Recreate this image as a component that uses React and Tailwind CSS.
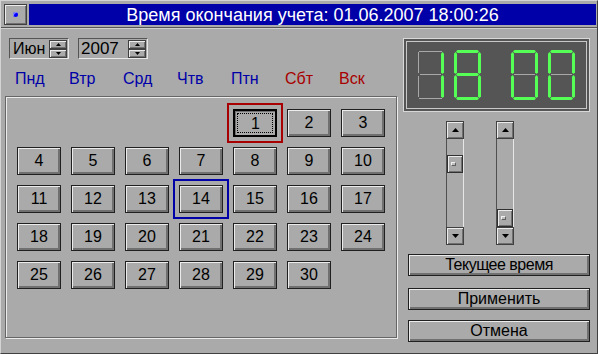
import React from "react";

const days = [
  { t: "Пнд", red: false },
  { t: "Втр", red: false },
  { t: "Срд", red: false },
  { t: "Чтв", red: false },
  { t: "Птн", red: false },
  { t: "Сбт", red: true },
  { t: "Вск", red: true },
];

// June 2007 starts on Friday (col 4)
const cells = [null, null, null, null, ...Array.from({ length: 30 }, (_, i) => i + 1)];

const bevel = "border border-[#202020] bg-[#aaaaaa] shadow-[inset_1px_1px_0_#ececec,inset_-2px_-2px_0_#707070]";

function Arrow({ up, w = 7, h = 4 }) {
  return (
    <svg width={w} height={h} viewBox={`0 0 ${w} ${h}`}>
      <polygon points={up ? `0,${h} ${w / 2},0 ${w},${h}` : `0,0 ${w / 2},${h} ${w},0`} fill="#000" />
    </svg>
  );
}

function Spin() {
  return (
    <div className="flex w-[18px] flex-col">
      <div className="flex h-[9px] items-center justify-center border border-[#404040] bg-[#aaaaaa] shadow-[inset_1px_1px_0_#ececec,inset_-1px_-1px_0_#707070]">
        <Arrow up w={5} h={3} />
      </div>
      <div className="flex h-[9px] items-center justify-center border border-[#404040] bg-[#aaaaaa] shadow-[inset_1px_1px_0_#ececec,inset_-1px_-1px_0_#707070]">
        <Arrow w={5} h={3} />
      </div>
    </div>
  );
}

function DayButton({ n }) {
  if (n === 1) {
    return (
      <div className="flex h-[28px] w-[44px] items-center justify-center border-2 border-black bg-[#aaaaaa] shadow-[inset_1px_1px_0_#707070] outline-2 outline-offset-4 outline-[#a80000]">
        <span className="flex h-[20px] w-[36px] items-center justify-center border border-dotted border-black pl-px pt-px">1</span>
      </div>
    );
  }
  const extra = n === 14 ? " outline-2 outline-offset-4 outline-[#0000a8]" : "";
  return <div className={"flex h-[28px] w-[44px] items-center justify-center " + bevel + extra}>{n}</div>;
}

// seven-segment drawing
const H = (L, y) => `${L + 2},${y + 1.5} ${L + 3.5},${y} ${L + 23.5},${y} ${L + 25},${y + 1.5} ${L + 23.5},${y + 3} ${L + 3.5},${y + 3}`;
const V = (x, y1, y2) => `${x + 1.5},${y1} ${x + 3},${y1 + 1.5} ${x + 3},${y2 - 1.5} ${x + 1.5},${y2} ${x},${y2 - 1.5} ${x},${y1 + 1.5}`;

const segOn = {
  "1": "bc",
  "8": "abcdefg",
  "0": "abcdef",
};

function Digit({ L, d }) {
  const on = segOn[d];
  const shapes = {
    a: { poly: H(L, 8), line: [L + 2, 9.5, L + 25, 9.5] },
    g: { poly: H(L, 31), line: [L + 3, 32.5, L + 24, 32.5] },
    d: { poly: H(L, 55), line: [L + 2, 56.5, L + 25, 56.5] },
    f: { poly: V(L, 10, 32), line: [L + 1.5, 10, L + 1.5, 31] },
    b: { poly: V(L + 24, 10, 32), line: [L + 25.5, 10, L + 25.5, 31] },
    e: { poly: V(L, 33, 56), line: [L + 1.5, 34, L + 1.5, 55] },
    c: { poly: V(L + 24, 33, 56), line: [L + 25.5, 34, L + 25.5, 55] },
  };
  return (
    <g>
      {Object.entries(shapes).map(([k, s]) =>
        on.includes(k) ? (
          <polygon key={k} points={s.poly} fill="#55ff55" />
        ) : (
          <line key={k} x1={s.line[0]} y1={s.line[1]} x2={s.line[2]} y2={s.line[3]} stroke="#a8a8a8" strokeWidth="1" />
        )
      )}
    </g>
  );
}

function ScrollBar({ thumbTop }) {
  const btn = "flex h-[18px] w-[18px] items-center justify-center border border-[#404040] bg-[#aaaaaa] shadow-[inset_1px_1px_0_#ececec,inset_-1px_-1px_0_#707070]";
  return (
    <div className="flex h-[124px] w-[18px] flex-col">
      <div className={btn}>
        <Arrow up />
      </div>
      <div className={"flex flex-1 flex-col border-l border-r border-l-[#505050] border-r-[#e6e6e6] " + (thumbTop ? "pt-[16px]" : "justify-end")}>
        <div className="flex h-[18px] w-full items-center border border-[#303030] bg-[#aaaaaa] pl-[3px] shadow-[inset_1px_1px_0_#ececec,inset_-1px_-1px_0_#707070]">
          <span className="h-[4px] w-[5px] border border-t-[#f0f0f0] border-l-[#f0f0f0] border-r-[#606060] border-b-[#606060] bg-[#bdbdbd]"></span>
        </div>
      </div>
      <div className={btn}>
        <Arrow />
      </div>
    </div>
  );
}

export default function App() {
  return (
    <div className="flex h-[354px] w-[598px] flex-col border border-t-[#d4d4d4] border-l-[#d4d4d4] border-r-[#404040] border-b-[#404040] bg-[#aaaaaa] font-['Liberation_Sans',Arial,sans-serif] text-[16px] leading-none text-black">
      {/* title */}
      <div className="flex h-[26px] pl-[3px] pr-px pt-[3px]">
        <div className="flex h-[21px] w-[23px] items-center justify-center border border-[#404040] bg-[#aaaaaa] shadow-[inset_1px_1px_0_#ececec,inset_-1px_-1px_0_#707070]">
          <span className="h-[5px] w-[5px] rounded-full bg-[#0000ff] shadow-[inset_1px_1px_0_#9090ff]"></span>
        </div>
        <div className="ml-[2px] flex h-[21px] flex-1 items-center justify-center bg-[#0000a8] text-[18px] text-white">
          Время окончания учета: 01.06.2007 18:00:26
        </div>
      </div>
      <div className="h-px bg-[#555555]"></div>
      <div className="h-px bg-[#cfcfcf]"></div>

      <div className="flex flex-1">
        {/* left column */}
        <div className="flex w-[396px] flex-col pl-[4px]">
          <div className="mt-[9px] flex gap-[9px] pl-[4px]">
            <div className="flex h-[21px] w-[60px] items-center border border-t-[#555555] border-l-[#555555] border-r-[#e8e8e8] border-b-[#e8e8e8] pr-px">
              <span className="flex-1 pl-[3px]">Июн</span>
              <Spin />
            </div>
            <div className="flex h-[21px] w-[70px] items-center border border-t-[#555555] border-l-[#555555] border-r-[#e8e8e8] border-b-[#e8e8e8] pr-px">
              <span className="flex-1 pl-[2px] text-[17px]">2007</span>
              <Spin />
            </div>
          </div>

          <div className="mt-[11px] flex h-[18px] items-center pl-[10px]">
            {days.map((d) => (
              <span key={d.t} className={"w-[54px] " + (d.red ? "text-[#a80000]" : "text-[#0000a8]")}>
                {d.t}
              </span>
            ))}
          </div>

          <div className="mt-[8px] h-[242px] w-[392px] border border-[#666666] pl-[11px] pt-[12px] shadow-[inset_1px_1px_0_#ececec,1px_1px_0_#ececec]">
            <div className="grid grid-cols-[repeat(7,44px)] gap-x-[10px] gap-y-[10px]">
              {cells.map((n, i) => (n ? <DayButton key={i} n={n} /> : <div key={i} className="h-[28px]"></div>))}
            </div>
          </div>
        </div>

        {/* right column */}
        <div className="flex flex-1 flex-col">
          <div className="ml-[6px] mt-[9px] flex h-[74px] w-[187px] border border-[#d8d8d8] bg-[#555555] p-[2px]">
            <div className="flex-1 border border-[#c8c8c8]">
              <svg width="179" height="66" viewBox="0 0 179 66" className="block">
                <Digit L={10} d="1" />
                <Digit L={47} d="8" />
                <Digit L={104} d="0" />
                <Digit L={141} d="0" />
              </svg>
            </div>
          </div>

          <div className="ml-[49px] mt-[9px] flex gap-[32px]">
            <ScrollBar thumbTop />
            <ScrollBar />
          </div>

          <div className="ml-[11px] flex flex-col text-[16px]">
            <div className={"mt-[9px] flex h-[22px] w-[182px] items-center justify-center tracking-[-0.5px] " + bevel}>Текущее время</div>
            <div className={"mt-[12px] flex h-[22px] w-[182px] items-center justify-center " + bevel}>Применить</div>
            <div className={"mt-[10px] flex h-[22px] w-[182px] items-center justify-center " + bevel}>Отмена</div>
          </div>
        </div>
      </div>
    </div>
  );
}
